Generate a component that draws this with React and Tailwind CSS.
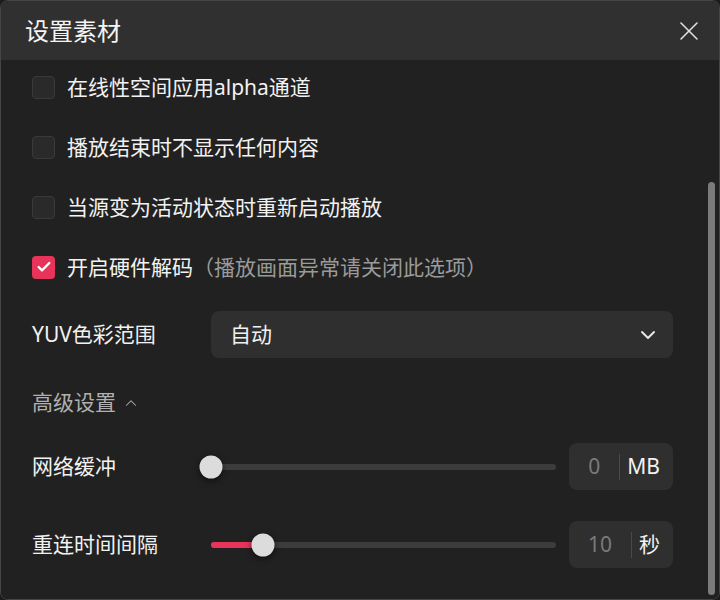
import React from 'react';
import { X, Check, ChevronDown, ChevronUp } from 'lucide-react';

const font = { fontFamily: "'Noto Sans', 'Noto Sans CJK SC', sans-serif" };

const Checkbox = ({ checked, label, hint }) => (
  <div className="flex items-center h-[24px]">
    {checked ? (
      <div className="w-[23px] h-[23px] rounded-[4px] bg-[#e8335a] flex items-center justify-center">
        <Check className="h-[16px] w-[16px] text-white" strokeWidth={3.5} />
      </div>
    ) : (
      <div className="w-[23px] h-[23px] rounded-[4px] bg-[#2a2a2a] border border-[#3a3a3a]"></div>
    )}
    <span className="ml-[12px] text-[21px] leading-none text-[#f2f2f2]">{label}</span>
    {hint && <span className="text-[21px] leading-none text-[#9a9a9a]">{hint}</span>}
  </div>
);

const SliderRow = ({ label, pct, value, unit, className }) => (
  <div className={`flex items-center ${className}`}>
    <div className="w-[179px] text-[21px] text-[#f2f2f2]">{label}</div>
    <div className="relative w-[345px] h-[6px] rounded-full bg-[#3c3c3c]">
      <div
        className="absolute left-0 top-0 h-full rounded-full bg-[#e8335a]"
        style={{ width: `${pct * 100}%` }}
      ></div>
      <div
        className="absolute top-1/2 -translate-y-1/2 -translate-x-1/2 w-[23px] h-[23px] rounded-full bg-[#dcdcdc] shadow-[0_2px_6px_rgba(0,0,0,0.6)]"
        style={{ left: `${pct * 100}%` }}
      ></div>
    </div>
    <div className="ml-[13px] w-[104px] h-[47px] rounded-[8px] bg-[#2f2f2f] flex items-center">
      <span className="flex-1 text-center text-[21px] text-[#7a7a7a]">{value}</span>
      <div className="w-px h-[26px] bg-[#4a4a4a]"></div>
      <span className="pl-[7px] pr-[13px] text-[21px] text-[#f2f2f2]">{unit}</span>
    </div>
  </div>
);

const App = () => {
  return (
    <div className="w-[720px] h-[600px] bg-[#1c1c1c]" style={font}>
      <div className="h-full flex flex-col rounded-[8px] border border-[#454545] overflow-hidden">
        <div className="h-[59px] shrink-0 bg-[#303030] flex items-center justify-between pl-[24px] pr-[14px]">
          <h1 className="text-[24px] text-[#f4f4f4] leading-none">设置素材</h1>
          <X className="h-[32px] w-[32px] text-[#e0e0e0]" strokeWidth={1.15} />
        </div>

        <div className="relative flex-1 bg-[#212121] pl-[31px] pr-[46px] pt-[15px] flex flex-col">
          <div className="flex flex-col gap-[36px]">
            <Checkbox label="在线性空间应用alpha通道" />
            <Checkbox label="播放结束时不显示任何内容" />
            <Checkbox label="当源变为活动状态时重新启动播放" />
            <Checkbox checked label="开启硬件解码" hint="（播放画面异常请关闭此选项）" />
          </div>

          <div className="flex items-center mt-[32px]">
            <div className="w-[179px] text-[21px] text-[#f2f2f2]">YUV色彩范围</div>
            <div className="flex-1 h-[47px] rounded-[8px] bg-[#2f2f2f] flex items-center justify-between pl-[19px] pr-[13px]">
              <span className="text-[21px] text-[#f2f2f2]">自动</span>
              <ChevronDown className="h-[24px] w-[24px] text-[#e6e6e6]" strokeWidth={2} />
            </div>
          </div>

          <div className="flex items-center mt-[31px] h-[28px]">
            <span className="text-[21px] text-[#b0b0b0]">高级设置</span>
            <ChevronUp className="ml-[6px] h-[18px] w-[18px] text-[#b0b0b0]" strokeWidth={1.4} />
          </div>

          <SliderRow className="mt-[26px]" label="网络缓冲" pct={0} value="0" unit="MB" />
          <SliderRow className="mt-[31px]" label="重连时间间隔" pct={0.15} value="10" unit="秒" />

          <div className="absolute right-[4px] top-[122px] bottom-[4px] w-[7px] rounded-full bg-[#7b7b7b]"></div>
        </div>
      </div>
    </div>
  );
};

export default App;
